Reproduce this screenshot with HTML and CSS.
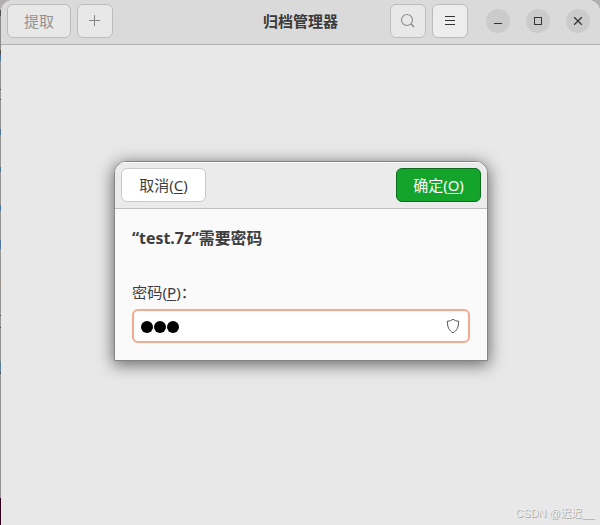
FILE: index.html
```html
<!DOCTYPE html>
<html lang="zh-CN">
<head>
<meta charset="utf-8">
<title>归档管理器</title>
<link rel="stylesheet" href="styles.css">
</head>
<body>
<div class="desktop">
  <main class="window">
    <header class="titlebar">
      <div class="group">
        <button class="btn extract">提取</button>
        <button class="btn square"><svg width="16" height="16"><path d="M7.5 3v11M2 8.5h11" stroke="#858585" fill="none"/></svg></button>
      </div>
      <h1 class="title">归档管理器</h1>
      <div class="group">
        <button class="btn square"><svg width="16" height="16"><circle cx="7" cy="8" r="5.5" stroke="#8c8c8c" stroke-width="1.1" fill="none"/><path d="M11 12l3 3" stroke="#8c8c8c" stroke-width="1.5"/></svg></button>
        <button class="btn square active"><svg width="16" height="16"><path d="M3 4.5h10M3 8.5h10M3 12.5h10" stroke="#333" fill="none"/></svg></button>
        <div class="controls">
          <button class="control"><svg width="16" height="16"><path d="M4 10.5h8" stroke="#333" fill="none"/></svg></button>
          <button class="control"><svg width="16" height="16" shape-rendering="crispEdges"><path d="M4.5 4.5h7v7h-7z" stroke="#333" fill="none"/></svg></button>
          <button class="control"><svg width="16" height="16"><path d="M4.2 4.2l7.6 7.6M11.8 4.2l-7.6 7.6" stroke="#333" stroke-width="1.3" fill="none"/></svg></button>
        </div>
      </div>
    </header>
    <section class="content"></section>
  </main>
  <section class="dialog">
    <header class="dialog-bar">
      <button class="btn action cancel">取消(<u>C</u>)</button>
      <button class="btn action confirm">确定(<u>O</u>)</button>
    </header>
    <div class="dialog-body">
      <h2 class="heading">“test.7z”需要密码</h2>
      <div class="label">密码(<u>P</u>)：</div>
      <div class="entry">
        <span class="dots"><i></i><i></i><i></i></span>
        <svg width="16" height="16"><path d="M8 1.2C6.5 2.5 4.6 3.2 2.4 3.2C2.2 8.5 4 12.8 8 14.9C12 12.8 13.8 8.5 13.6 3.2C11.4 3.2 9.5 2.5 8 1.2z" stroke="#555" fill="none"/></svg>
      </div>
    </div>
  </section>
  <div class="watermark">CSDN @迟迟__</div>
</div>
</body>
</html>
```
FILE: styles.css
```css
* { box-sizing: border-box; }
body { margin: 0; font: 15px/20px "Noto Sans", "Noto Sans CJK SC", sans-serif; color: #3d3d3d; }
button { font: inherit; color: inherit; padding: 0; }
svg { display: block; }
h1, h2 { margin: 0; font-size: 15px; font-weight: 700; }
u { text-decoration-thickness: 1px; text-underline-offset: 2px; }
.desktop {
  position: relative;
  width: 600px; height: 525px; overflow: hidden; padding-left: 1px;
  background: linear-gradient(#b0aeae 0 10px, #534c50 10px 16px, #8e8c8b 16px 50px, #534c50 50px 53px, #4f789d 57px 61px, #969494 61px 89px, #444 89px 90px, #969494 90px 99px, #444 99px 100px, #969494 100px 128px, #4d7397 130px 135px, #969494 135px 167px, #4d7397 167px 172px, #969494 172px 205px, #4c75a0 205px 211px, #969494 211px 240px, #4c75a0 240px 249px, #969494 249px 283px, #a38c6c 283px 286px, #969494 286px 315px, #444 315px 316px, #969494 316px 327px, #444 327px 328px, #969494 328px 361px, #568096 361px 372px, #444 373px 374px, #969494 374px 498px, #2c001e 498px);
}
.window { height: 525px; background: #e8e8e8; border-radius: 12px 12px 0 0; overflow: hidden; }
.titlebar {
  height: 45px; padding: 4px 10px 6px 6px; display: grid; grid-template-columns: 1fr auto 1fr;
  background: #dadada; border-bottom: 1px solid #b1b1b1;
}
.group { display: flex; gap: 6px; align-items: center; }
.group:last-child { justify-content: flex-end; }
.title { align-self: center; color: #3a3a3a; transform: translateX(2px); }
.btn {
  height: 34px; border: 1px solid #bcbcbc; border-radius: 6px; background: #e8e8e8;
  display: flex; align-items: center; justify-content: center;
}
.extract { width: 64px; color: #929292; }
.square { width: 36px; }
.square svg { transform: translateY(-1px); }
.active { background: #ededed; }
.controls { display: flex; gap: 16px; margin-left: 12px; }
.control {
  width: 24px; height: 24px; border: 0; border-radius: 50%; background: #cbcbcb;
  display: flex; align-items: center; justify-content: center;
}
.dialog {
  position: absolute; left: 114px; top: 161px; width: 374px; height: 200px;
  border: 1px solid #858585; border-radius: 12px 12px 0 0; background: #fafafa;
  box-shadow: 0 3px 16px 1px rgba(0, 0, 0, .55); overflow: hidden;
}
.dialog-bar {
  height: 47px; padding: 6px; display: flex; justify-content: space-between;
  background: #ebebeb; border-bottom: 1px solid #bfbfbf; box-shadow: inset 0 1px #fff;
}
.action { width: 85px; }
.cancel { background: #fff; border-color: #c9c9c9; }
.confirm { background: #14a42c; border-color: #0c6c1c; color: #fff; }
.dialog-body { padding: 19px 17px 17px; }
.heading { height: 54px; font-size: 15.9px; }
.label { height: 27px; font-size: 15.2px; }
.entry {
  height: 34px; border: 2px solid #f4aa90; border-radius: 6px; background: #fff;
  display: flex; align-items: center; justify-content: space-between; padding: 0 7px;
}
.dots { display: flex; gap: 1px; padding-top: 2px; }
.dots i { width: 12px; height: 12px; border-radius: 50%; background: #000; }
.watermark {
  position: absolute; right: 6px; bottom: 3px;
  font: 11px/18px "Liberation Sans", "Noto Sans CJK SC", sans-serif;
  color: #eee; text-shadow: 1px 1px #aaa; letter-spacing: -.1px;
}
```
